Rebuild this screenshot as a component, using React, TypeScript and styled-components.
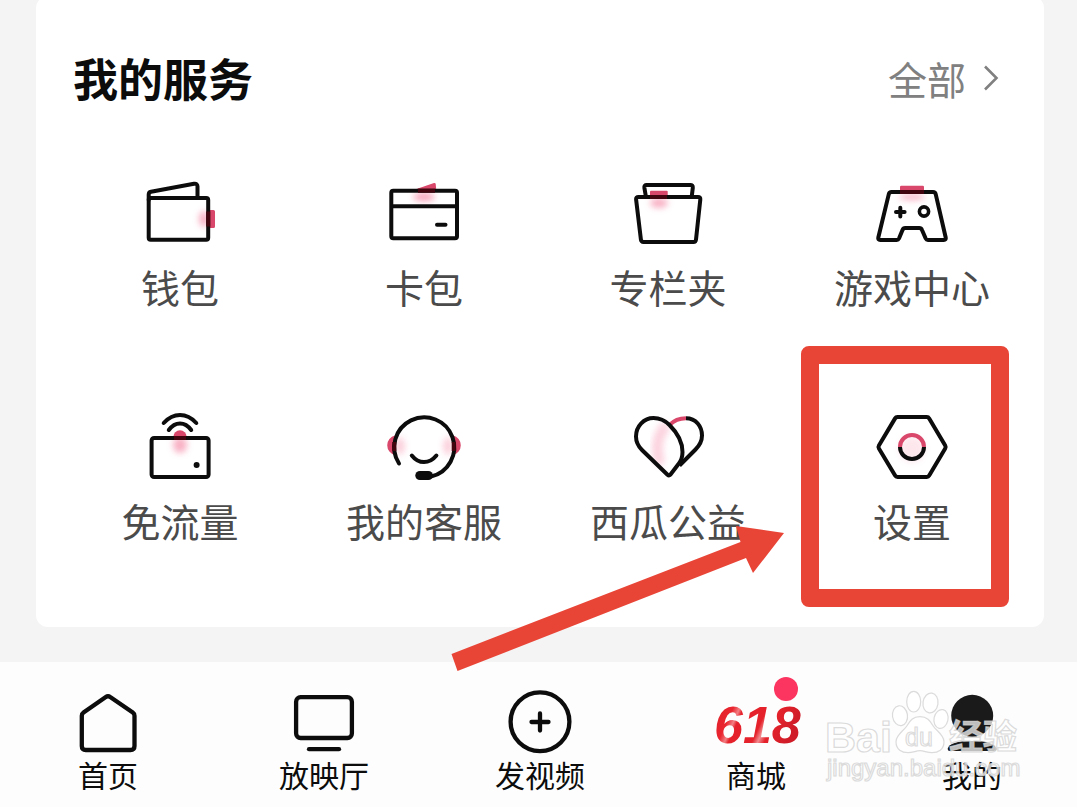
import React from "react";
import styled, { createGlobalStyle } from "styled-components";

const INK = "#0c0c0c";
const PINK = "#d9476a";
const RED = "#e94537";

const GlobalStyle = createGlobalStyle`
  *, *::before, *::after { box-sizing: border-box; }
  body {
    margin: 0;
    background: #f4f4f4;
    font-family: "Noto Sans CJK SC", "Noto Sans", sans-serif;
    overflow-x: hidden;
  }
  button { font: inherit; color: inherit; border: 0; background: none; padding: 0; margin: 0; cursor: pointer; }
`;

const Page = styled.div`
  display: flex;
  flex-direction: column;
  min-height: 100vh;
  overflow: hidden;
`;

const Card = styled.section`
  margin: -4px 33px 35px 36px;
  padding: 52px 10px 82px 22px;
  border-radius: 12px;
  background: #fff;
`;

const CardHeader = styled.header`
  display: flex;
  align-items: center;
  justify-content: space-between;
  height: 60px;
  margin-bottom: 64px;
  padding: 0 34px 0 15px;
`;

const Title = styled.h2`
  margin: 0;
  font-size: 45px;
  line-height: 60px;
  font-weight: 700;
  color: ${INK};
`;

const AllLink = styled.a`
  display: flex;
  align-items: center;
  gap: 16px;
  font-size: 39px;
  line-height: 58px;
  color: #808080;
  text-decoration: none;
`;

const Services = styled.div`
  position: relative;
  display: grid;
  grid-template-columns: repeat(4, 1fr);
  row-gap: 95px;
`;

const ServiceButton = styled.button`
  position: relative;
  display: flex;
  flex-direction: column;
  align-items: center;
  gap: 9px;
`;

const ServiceLabel = styled.span`
  font-size: 39px;
  line-height: 50px;
  color: #4b4b4b;
  white-space: nowrap;
`;

const HighlightFrame = styled.span`
  position: absolute;
  inset: -60px 25px -62px 11px;
  border: 18px solid ${RED};
  border-radius: 8px;
`;

const Arrow = styled.svg`
  position: absolute;
  right: 246px;
  bottom: -129px;
  z-index: 2;
  pointer-events: none;
`;

const NavBar = styled.nav`
  position: relative;
  flex: 1;
  display: grid;
  grid-template-columns: repeat(5, 1fr);
  align-items: start;
  margin-right: -3px;
  padding: 22px 0 14px;
  background: #fdfdfd;
`;

const NavButton = styled.button`
  display: flex;
  flex-direction: column;
  align-items: center;
`;

const NavIconBox = styled.span`
  position: relative;
  display: block;
  height: 70px;
`;

const NavLabel = styled.span`
  font-size: 30px;
  line-height: 40px;
  color: ${INK};
  white-space: nowrap;
`;

const Badge = styled.span`
  position: absolute;
  top: -7px;
  right: -2px;
  width: 24px;
  height: 24px;
  border-radius: 50%;
  background: #fb3560;
  box-shadow: 0 0 0 2px #fdfdfd;
`;

const Watermark = styled.svg`
  position: absolute;
  top: 23px;
  right: 50px;
  pointer-events: none;
`;

const ServiceIcon = ({ children }: { children: React.ReactNode }) => (
  <svg width="80" height="80" viewBox="0 0 80 80" fill="none" stroke={INK} strokeWidth="4" strokeLinecap="round" strokeLinejoin="round" aria-hidden="true">
    {children}
  </svg>
);

const NavIcon = ({ children }: { children: React.ReactNode }) => (
  <svg width="80" height="72" viewBox="0 0 80 72" fill="none" stroke={INK} strokeWidth="4.3" strokeLinecap="round" strokeLinejoin="round" overflow="visible" aria-hidden="true">
    {children}
  </svg>
);

const Glow = ({ cx, cy, rx, ry, opacity = 0.3 }: { cx: number; cy: number; rx: number; ry: number; opacity?: number }) => (
  <ellipse cx={cx} cy={cy} rx={rx} ry={ry} fill="#f2628a" stroke="none" opacity={opacity} filter="url(#soft)" />
);

const Defs = () => (
  <svg width="0" height="0" style={{ position: "absolute" }} aria-hidden="true">
    <defs>
      <filter id="soft" x="-100%" y="-150%" width="300%" height="400%">
        <feGaussianBlur stdDeviation="3.2" />
      </filter>
    </defs>
  </svg>
);

const services = [
  {
    label: "钱包",
    icon: (
      <>
        <Glow cx={64} cy={47} rx={5} ry={8} opacity={0.5} />
        <path d="M70 38h3.500a1.500 1.500 0 0 1 1.500 1.500v15a1.500 1.500 0 0 1-1.500 1.500H70z" fill={PINK} stroke="none" />
        <rect x="8.700" y="26" width="59.500" height="41.700" rx="2" />
        <path d="M8.700 28v-5.500q0-2.300 2.300-2.800L54 11.800q3.500-.6 3.500 2.800V25" />
        <path d="M68.200 39.500v15" stroke="#42040f" strokeLinecap="butt" />
      </>
    ),
  },
  {
    label: "卡包",
    icon: (
      <>
        <Glow cx={40} cy={25} rx={11} ry={4} opacity={0.6} />
        <path d="M31 17.500 50 11q1.500-.4 1.700 1l.5 5.500z" fill={PINK} stroke="none" />
        <rect x="7.300" y="18.700" width="65.700" height="47.500" rx="2" />
        <path d="M8 34.200h64" strokeLinecap="butt" />
        <path d="M53 52.800h8.500" />
        <path d="M34 18.700h17" stroke="#42040f" strokeLinecap="butt" />
      </>
    ),
  },
  {
    label: "专栏夹",
    icon: (
      <>
        <Glow cx={31} cy={31} rx={9} ry={5} opacity={0.5} />
        <path d="M17.800 24 16.400 15.800Q16 13 18.700 13h43.600q2.700 0 2.500 2.800L63.800 24" />
        <rect x="22" y="18.700" width="17.700" height="6" rx="1" fill={PINK} stroke="none" />
        <path d="M10.500 25h59.500q2.600 0 2.300 2.600L68 67.600q-.3 2.400-2.600 2.400H15.500q-2.300 0-2.600-2.400L8.100 27.600Q7.800 25 10.500 25z" />
        <path d="M22 25h17" stroke="#42040f" strokeLinecap="butt" />
      </>
    ),
  },
  {
    label: "游戏中心",
    icon: (
      <>
        <Glow cx={40} cy={25} rx={13} ry={3} opacity={0.5} />
        <path d="M28 18.500v-3.500q0-1.200 1.200-1.200h21.600q1.200 0 1.200 1.200v3.500z" fill={PINK} stroke="none" />
        <path d="M19.500 20h41.500q2.200 0 2.700 2.100L73.700 65.500q.5 2.500-1.900 2.500H56q-1.600 0-2.300-1.500L50 58q-.8-2-2.700-2H33.200q-1.900 0-2.700 2L27 66.500Q26.300 68 24.700 68H8.200q-2.400 0-1.900-2.500L16.800 22.100Q17.300 20 19.500 20z" />
        <path d="M28.300 35.800v8.600M24 40.100h8.600" />
        <circle cx="52" cy="39.500" r="4.600" strokeWidth="3.600" />
        <path d="M28 20h24" stroke="#42040f" strokeLinecap="butt" />
      </>
    ),
  },
  {
    label: "免流量",
    icon: (
      <>
        <Glow cx={40} cy={39} rx={7} ry={8} opacity={0.5} />
        <path d="M33.300 31a6.700 6.700 0 0 1 13.400 0z" fill={PINK} stroke="none" />
        <rect x="11.600" y="32" width="57" height="39" rx="2.500" />
        <path d="M23.700 17Q31 9 40 9t16.300 8M28.800 24Q33.500 17.400 40 17.400T51.200 24" />
        <circle cx="56.600" cy="59" r="3" fill={INK} stroke="none" />
        <path d="M34 32h12" stroke="#42040f" strokeLinecap="butt" />
      </>
    ),
  },
  {
    label: "我的客服",
    icon: (
      <>
        <Glow cx={16} cy={40} rx={5} ry={9} />
        <Glow cx={64} cy={40} rx={5} ry={9} />
        <path d="M11 29.500a10 10 0 0 0 0 19.500zM69 29.500a10 10 0 0 1 0 19.500z" fill={PINK} stroke="none" />
        <path d="M15 57.500A30 30 0 1 1 47 70.500" />
        <path d="M10.300 36v9M69.700 36v9" stroke="#42040f" strokeLinecap="butt" />
        <path d="M27.800 49.500q5.200 6.600 12.200 6.600t12.400-6.600" />
        <rect x="31.300" y="65" width="17.600" height="9" rx="4.500" fill={INK} stroke="none" />
      </>
    ),
  },
  {
    label: "西瓜公益",
    icon: (
      <>
        <path d="M36 22Q26 36 31 54" stroke="#f582a4" strokeWidth="11" opacity=".35" filter="url(#soft)" />
        <path d="M41.500 19Q48 12.200 58 12.200" stroke={PINK} strokeLinecap="butt" />
        <path d="M58 12.200C68 12.200 74 20.500 74 29.500c0 6-2.700 10.200-6.500 14L51.500 59.500" strokeLinecap="butt" />
        <path d="M39.500 68.700 14 44C10 40 8 36 8 30.500 8 20 16 12 25.500 12 31.500 12 36.500 14 41.500 19 50 27.500 54.500 36 54.500 46c0 5.500-1 8.500-4 12L42.500 68.500q-1.500 1.500-3 .2z" />
      </>
    ),
  },
  {
    label: "设置",
    highlighted: true,
    icon: (
      <>
        <path d="M25.500 11h29.300q1.600 0 2.400 1.400l16 27.100q.9 1.500 0 3L57.200 69.600Q56.400 71 54.800 71H25.500q-1.600 0-2.400-1.400L6.900 42.500q-.9-1.500 0-3l16.200-27.100Q23.900 11 25.500 11z" />
        <Glow cx={40} cy={43} rx={13} ry={13} opacity={0.15} />
        <path d="M28 41a12 12 0 0 1 24 0" stroke={PINK} strokeLinecap="butt" />
        <path d="M28 41a12 12 0 0 0 24 0" strokeLinecap="butt" />
      </>
    ),
  },
];

const navItems = [
  {
    label: "首页",
    icon: <path d="M37.800 13Q40 11.400 42.200 13L64.800 28.600q1.700 1.200 1.700 3.200V62q0 4-4 4H17.800q-4 0-4-4V31.800q0-2 1.700-3.200z" />,
  },
  {
    label: "放映厅",
    icon: (
      <>
        <rect x="12.100" y="13.200" width="55.800" height="40.800" rx="4.500" />
        <path d="M25 65.200h30" />
      </>
    ),
  },
  {
    label: "发视频",
    icon: (
      <>
        <circle cx="40" cy="37.800" r="29.400" />
        <path d="M40 29.500v17M31.500 38h17" />
      </>
    ),
  },
  {
    label: "商城",
    badge: true,
    icon: (
      <>
        <defs>
          <linearGradient id="sale" x1="0" y1="0" x2="1" y2=".3">
            <stop offset="0" stopColor="#dc1f28" />
            <stop offset=".26" stopColor="#ea2630" />
            <stop offset=".33" stopColor="#f28084" />
            <stop offset=".37" stopColor="#e5222b" />
            <stop offset=".62" stopColor="#e5222b" />
            <stop offset=".68" stopColor="#f18c90" />
            <stop offset=".75" stopColor="#e5222b" />
            <stop offset="1" stopColor="#cf1c28" />
          </linearGradient>
        </defs>
        <text x="-2" y="59" fontFamily="'Liberation Sans', sans-serif" fontSize="52" fontWeight="700" fontStyle="italic" fill="url(#sale)" stroke="none">
          618
        </text>
      </>
    ),
  },
  {
    label: "我的",
    icon: (
      <g fill="#1a1a1a" stroke="none">
        <circle cx="40.200" cy="31.800" r="21" />
        <path d="M18 67q-2.500 0-2.200-2.500Q17.500 57 40 57t24.300 7.500Q64.500 67 62 67z" />
      </g>
    ),
  },
];

export default function App() {
  return (
    <Page>
      <GlobalStyle />
      <Defs />
      <Card>
        <CardHeader>
          <Title>我的服务</Title>
          <AllLink href="#all">
            全部
            <svg width="18" height="28" viewBox="0 0 18 28" fill="none" stroke="#808080" strokeWidth="2.600" aria-hidden="true">
              <path d="M3 2.500 14.500 14 3 25.500" />
            </svg>
          </AllLink>
        </CardHeader>
        <Services>
          {services.map((item) => (
            <ServiceButton key={item.label} type="button">
              <ServiceIcon>{item.icon}</ServiceIcon>
              <ServiceLabel>{item.label}</ServiceLabel>
              {item.highlighted && <HighlightFrame />}
            </ServiceButton>
          ))}
          <Arrow width="340" height="152" viewBox="0 0 340 152" fill={RED} aria-hidden="true">
            <path d="M3.500 132 292.500 20 288 4 336 11 305 51 298 36 9.500 149z" />
          </Arrow>
        </Services>
      </Card>
      <NavBar>
        {navItems.map((item) => (
          <NavButton key={item.label} type="button">
            <NavIconBox>
              <NavIcon>{item.icon}</NavIcon>
              {item.badge && <Badge />}
            </NavIconBox>
            <NavLabel>{item.label}</NavLabel>
          </NavButton>
        ))}
        <Watermark width="210" height="104" viewBox="0 0 210 104" fill="#fff" fillOpacity=".72" stroke="#d2d2d2" strokeOpacity=".8" strokeWidth="1.200" fontFamily="'Liberation Sans', sans-serif">
          <text x="5" y="67" fontSize="43" fontWeight="700">Bai</text>
          <ellipse cx="80" cy="30.700" rx="7.500" ry="10" transform="rotate(-8 80 30.700)" />
          <ellipse cx="93.700" cy="16.700" rx="7" ry="10.300" />
          <ellipse cx="110.500" cy="18" rx="7.500" ry="10" transform="rotate(8 110.500 18)" />
          <ellipse cx="121" cy="34" rx="7" ry="9.500" transform="rotate(12 121 34)" />
          <path d="M100 31.700c7 0 10 4 13 9s11 9 11 16c0 8-6 11-12 11-5 0-8-2-12-2s-7 2-12 2c-6 0-12-3-12-11 0-7 8-11 11-16s6-9 13-9z" />
          <text x="85" y="61" fontSize="25">du</text>
          <text x="129" y="64" fontSize="34" fontWeight="700" fontFamily="'Noto Sans CJK SC', sans-serif">经验</text>
          <text x="7" y="91" fontSize="24">jingyan.baidu.com</text>
        </Watermark>
      </NavBar>
    </Page>
  );
}
